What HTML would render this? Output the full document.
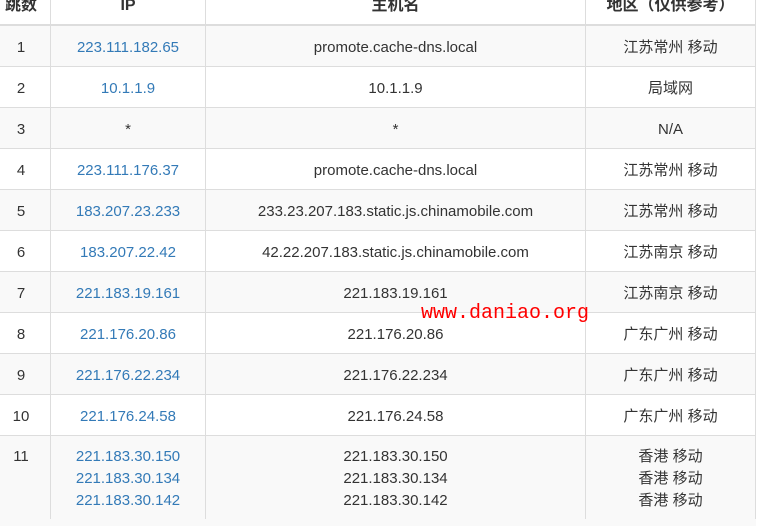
<!DOCTYPE html>
<html><head><meta charset="utf-8"><style>
body{margin:0;width:762px;height:519px;overflow:hidden;background:#fff;font-family:"Liberation Sans","Noto Sans CJK SC",sans-serif;font-size:15px;color:#333;position:relative}
.r{position:absolute;left:0;width:756px;border-bottom:1px solid #ddd}
.g{background:#f9f9f9}
.c{position:absolute;top:0;text-align:center;line-height:43px;white-space:nowrap}
.a{color:#337ab7}
.v{position:absolute;top:0;width:1px;height:519px;background:#ddd}
.h{font-weight:bold;line-height:12px;top:0;font-size:16px}
.wm{position:absolute;left:421px;top:301px;font-family:"Liberation Mono",monospace;font-size:20px;color:#f00;line-height:26px}
</style></head><body>
<div class="r" style="top:0;height:24px;border-bottom:2px solid #ddd">
<div class="c h" style="left:0;width:42px">跳数</div>
<div class="c h" style="left:51px;width:154px">IP</div>
<div class="c h" style="left:206px;width:379px">主机名</div>
<div class="c h" style="left:586px;width:169px">地区（仅供参考）</div>
</div>
<div class="r g" style="top:26px;height:40px"><div class="c" style="left:0;width:42px">1</div><div class="c a" style="left:51px;width:154px">223.111.182.65</div><div class="c" style="left:206px;width:379px">promote.cache-dns.local</div><div class="c" style="left:586px;width:169px">江苏常州 移动</div></div>
<div class="r" style="top:67px;height:40px"><div class="c" style="left:0;width:42px">2</div><div class="c a" style="left:51px;width:154px">10.1.1.9</div><div class="c" style="left:206px;width:379px">10.1.1.9</div><div class="c" style="left:586px;width:169px">局域网</div></div>
<div class="r g" style="top:108px;height:40px"><div class="c" style="left:0;width:42px">3</div><div class="c" style="left:51px;width:154px">*</div><div class="c" style="left:206px;width:379px">*</div><div class="c" style="left:586px;width:169px">N/A</div></div>
<div class="r" style="top:149px;height:40px"><div class="c" style="left:0;width:42px">4</div><div class="c a" style="left:51px;width:154px">223.111.176.37</div><div class="c" style="left:206px;width:379px">promote.cache-dns.local</div><div class="c" style="left:586px;width:169px">江苏常州 移动</div></div>
<div class="r g" style="top:190px;height:40px"><div class="c" style="left:0;width:42px">5</div><div class="c a" style="left:51px;width:154px">183.207.23.233</div><div class="c" style="left:206px;width:379px">233.23.207.183.static.js.chinamobile.com</div><div class="c" style="left:586px;width:169px">江苏常州 移动</div></div>
<div class="r" style="top:231px;height:40px"><div class="c" style="left:0;width:42px">6</div><div class="c a" style="left:51px;width:154px">183.207.22.42</div><div class="c" style="left:206px;width:379px">42.22.207.183.static.js.chinamobile.com</div><div class="c" style="left:586px;width:169px">江苏南京 移动</div></div>
<div class="r g" style="top:272px;height:40px"><div class="c" style="left:0;width:42px">7</div><div class="c a" style="left:51px;width:154px">221.183.19.161</div><div class="c" style="left:206px;width:379px">221.183.19.161</div><div class="c" style="left:586px;width:169px">江苏南京 移动</div></div>
<div class="r" style="top:313px;height:40px"><div class="c" style="left:0;width:42px">8</div><div class="c a" style="left:51px;width:154px">221.176.20.86</div><div class="c" style="left:206px;width:379px">221.176.20.86</div><div class="c" style="left:586px;width:169px">广东广州 移动</div></div>
<div class="r g" style="top:354px;height:40px"><div class="c" style="left:0;width:42px">9</div><div class="c a" style="left:51px;width:154px">221.176.22.234</div><div class="c" style="left:206px;width:379px">221.176.22.234</div><div class="c" style="left:586px;width:169px">广东广州 移动</div></div>
<div class="r" style="top:395px;height:40px"><div class="c" style="left:0;width:42px">10</div><div class="c a" style="left:51px;width:154px">221.176.24.58</div><div class="c" style="left:206px;width:379px">221.176.24.58</div><div class="c" style="left:586px;width:169px">广东广州 移动</div></div>
<div class="r g" style="top:436px;height:90px;border:none">
<div class="c" style="left:0;width:42px;top:10px;line-height:22px">11</div>
<div class="c a" style="left:51px;width:154px;top:10px;line-height:22px">221.183.30.150<br>221.183.30.134<br>221.183.30.142</div>
<div class="c" style="left:206px;width:379px;top:10px;line-height:22px">221.183.30.150<br>221.183.30.134<br>221.183.30.142</div>
<div class="c" style="left:586px;width:169px;top:10px;line-height:22px">香港 移动<br>香港 移动<br>香港 移动</div>
</div>
<div class="v" style="left:50px"></div>
<div class="v" style="left:205px"></div>
<div class="v" style="left:585px"></div>
<div class="v" style="left:755px"></div>
<div class="wm">www.daniao.org</div>
</body></html>
